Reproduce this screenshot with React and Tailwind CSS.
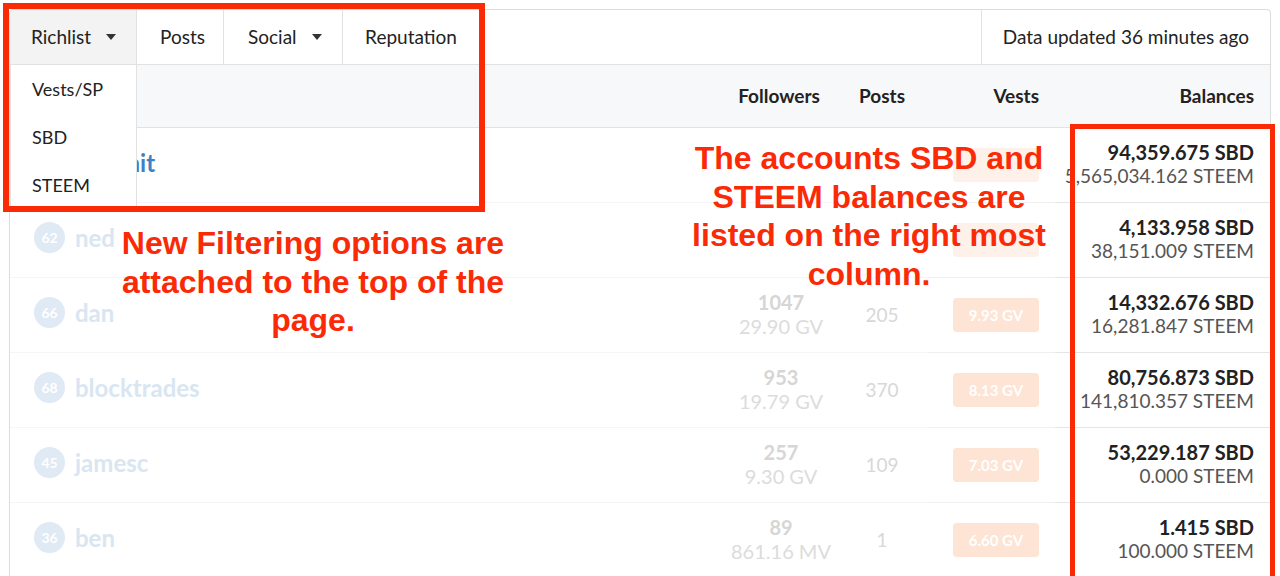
import React from 'react';

const rows = [
  { rep: '', name: 'steemit', sbd: '94,359.675 SBD', steem: '5,565,034.162 STEEM', top: true, hidden: true },
  { rep: '62', name: 'ned', sbd: '4,133.958 SBD', steem: '38,151.009 STEEM', hidden: true },
  { rep: '66', name: 'dan', followers: '1047', fv: '29.90 GV', posts: '205', vests: '9.93 GV', sbd: '14,332.676 SBD', steem: '16,281.847 STEEM' },
  { rep: '68', name: 'blocktrades', followers: '953', fv: '19.79 GV', posts: '370', vests: '8.13 GV', sbd: '80,756.873 SBD', steem: '141,810.357 STEEM' },
  { rep: '45', name: 'jamesc', followers: '257', fv: '9.30 GV', posts: '109', vests: '7.03 GV', sbd: '53,229.187 SBD', steem: '0.000 STEEM' },
  { rep: '36', name: 'ben', followers: '89', fv: '861.16 MV', posts: '1', vests: '6.60 GV', sbd: '1.415 SBD', steem: '100.000 STEEM' },
];

const Caret = () => (
  <svg width="10" height="6" viewBox="0 0 10 6" className="ml-[15px] shrink-0">
    <path d="M0 0h10L5 6z" fill="#333" />
  </svg>
);

const grid = 'grid grid-cols-[1fr_110px_92px_127px_215px]';

const Row = ({ r }) => (
  <div className={`${grid} h-[75px] items-center`}>
    <div className="flex items-center pl-[24px] pb-[5px] h-full border-b border-[#f6f6f6]">
      <div className="w-[31px] h-[31px] rounded-full bg-[#dfeaf5] text-white text-[14px] font-bold flex items-center justify-center">
        {r.rep}
      </div>
      <span className={`ml-[10px] text-[24px] font-bold ${r.top ? 'text-[#3f82c4]' : 'text-[#d9e6f2]'}`}>{r.name}</span>
    </div>
    <div className="flex flex-col items-center justify-center pb-[2px] leading-[24px] text-[20px] h-full border-b border-[#f6f6f6]">
      {!r.hidden && <span className="font-bold text-[#d6d6d6]">{r.followers}</span>}
      {!r.hidden && <span className="text-[#dcdcdc]">{r.fv}</span>}
    </div>
    <div className="flex items-center justify-center text-[19px] text-[#d8d8d8] h-full border-b border-[#f6f6f6]">
      {!r.hidden && r.posts}
    </div>
    <div className="flex items-center justify-end pr-[16px] h-full border-b border-[#f0f0f0]">
      <span className={`w-[86px] h-[34px] rounded-[4px] text-white text-[15px] font-bold flex items-center justify-center ${r.hidden ? 'bg-[#fdf1e9]' : 'bg-[#fde4d4]'}`}>
        {!r.hidden && r.vests}
      </span>
    </div>
    <div className="flex flex-col items-end pr-[16px] pb-[2px] h-full justify-center border-b border-[#e6e6e6]">
      <span className="font-bold text-[#222] text-[20px] leading-[23px]">{r.sbd}</span>
      <span className="text-[#555] text-[19px] leading-[24px] whitespace-nowrap">{r.steem}</span>
    </div>
  </div>
);

const Note = ({ lines, className }) => (
  <div className={`absolute text-center text-[#fb2a06] font-bold text-[32px] leading-[38.5px] font-['Liberation_Sans',Arial,sans-serif] ${className}`}>
    {lines.map((l) => (
      <div key={l}>{l}</div>
    ))}
  </div>
);

const App = () => {
  return (
    <div className="relative w-[1280px] h-[576px] overflow-hidden bg-white font-['Lato','Open_Sans',sans-serif] text-[#222]">
      <div className="mx-[9px] mt-[9px] border border-[#dcdcdc] rounded-[4px] h-[600px]">
        <div className="flex h-[55px] border-b border-[#e2e2e2] text-[19px]">
          <div className="flex items-center pl-[21px] bg-[#f3f3f3] border-r border-[#e2e2e2] w-[127px] shrink-0">
            Richlist
            <Caret />
          </div>
          <div className="flex items-center justify-center pl-[5px] w-[87px] shrink-0 border-r border-[#e2e2e2]">Posts</div>
          <div className="flex items-center pl-[24px] w-[119px] shrink-0 border-r border-[#e2e2e2]">
            Social
            <Caret />
          </div>
          <div className="flex items-center justify-center w-[137px] shrink-0 border-r border-[#e2e2e2]">Reputation</div>
          <div className="flex-1" />
          <div className="flex items-center px-[21px] border-l border-[#e2e2e2]">Data updated 36 minutes ago</div>
        </div>
        <div className={`${grid} h-[63px] items-center bg-[#f7f8fa] border-b border-[#e2e2e2] text-[19px] font-bold`}>
          <div />
          <div className="text-center pr-[4px]">Followers</div>
          <div className="text-center">Posts</div>
          <div className="text-right pr-[16px]">Vests</div>
          <div className="text-right pr-[16px]">Balances</div>
        </div>
        {rows.map((r) => (
          <Row key={r.name} r={r} />
        ))}
      </div>

      <div className="absolute left-[10px] top-[64px] w-[127px] h-[146px] bg-white border border-[#e2e2e2] text-[18px] flex flex-col pl-[21px]">
        <span className="h-[49px] flex items-center">Vests/SP</span>
        <span className="h-[49px] flex items-center">SBD</span>
        <span className="h-[49px] flex items-center">STEEM</span>
      </div>

      <div className="absolute left-[3px] top-[3px] w-[482px] h-[209px] border-[6px] border-[#fb2a06]" />
      <div className="absolute left-[1070px] top-[124px] w-[205px] h-[460px] border-[5px] border-[#fb2a06]" />

      <Note
        className="left-[90px] top-[224px] w-[446px]"
        lines={['New Filtering options are', 'attached to the top of the', 'page.']}
      />
      <Note
        className="left-[650px] top-[139px] w-[438px]"
        lines={['The accounts SBD and', 'STEEM balances are', 'listed on the right most', 'column.']}
      />
    </div>
  );
};

export default App;
